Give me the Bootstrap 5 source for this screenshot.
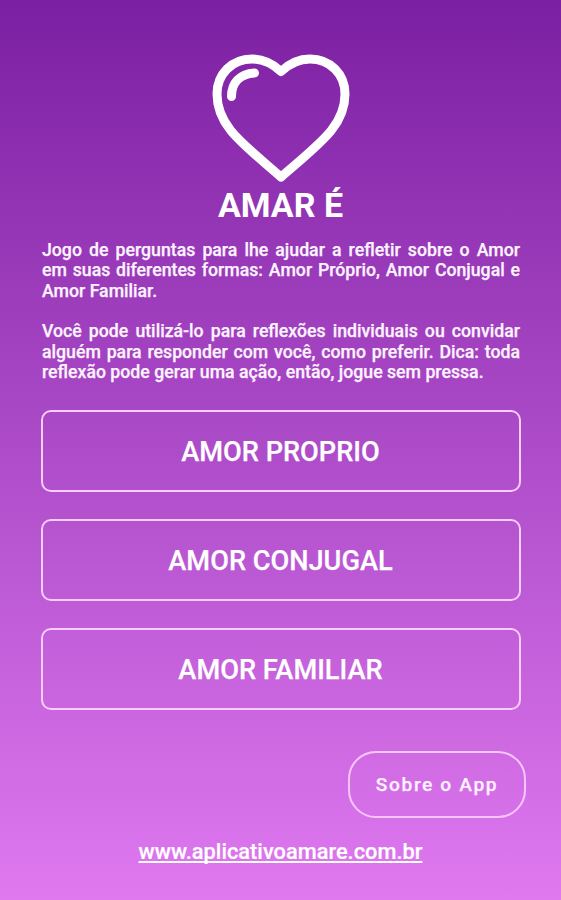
<!DOCTYPE html>
<html lang="pt-BR">
<head>
<meta charset="utf-8">
<meta name="viewport" content="width=device-width, initial-scale=1">
<title>Amar É</title>
<link href="https://cdn.jsdelivr.net/npm/bootstrap@5.3.0/dist/css/bootstrap.min.css" rel="stylesheet">
<style>
  body { font-family: Roboto, "Liberation Sans", sans-serif; background: linear-gradient(#7b1fa2, #e079f0) no-repeat; height: 900px; }
  .screen { height: 900px; padding: 52px 40px 0 41px; }
  .heart { width: 141px; height: 132px; margin-right: 1px; }
  .app-title { font-size: 34px; line-height: 42px; font-weight: 700; margin: 0 1px 0 0; }
  .intro { font-size: 17.7px; line-height: 20.4px; font-weight: 500; text-align: justify; color: #fdf3ff; -webkit-text-stroke: .25px; margin-top: 13.8px; padding: 0 1px; }
  .intro p { margin-bottom: 20.4px; }
  .choices { gap: 27px; margin-top: 7.2px; }
  .choice { --bs-btn-color: #fff; --bs-btn-border-color: #f6cdfb; --bs-btn-border-radius: 10px; --bs-btn-border-width: 2px; --bs-btn-font-size: 27.2px; --bs-btn-font-weight: 500; --bs-btn-padding-y: 0; height: 82px; padding: 2px 1px 0 0; -webkit-text-stroke: .25px; }
  .about { --bs-btn-color: #fdf0ff; --bs-btn-border-color: #f6c6fc; --bs-btn-border-radius: 28px; --bs-btn-border-width: 2px; --bs-btn-font-size: 19.2px; --bs-btn-font-weight: 500; width: 178px; height: 67px; letter-spacing: 1.6px; padding-top: 8px; margin: 41px -5px 0 0; -webkit-text-stroke: .25px; }
  .site { font-size: 21.8px; line-height: 26px; font-weight: 500; margin: 21px 1px 0 0; text-underline-offset: 2px; text-decoration-thickness: 2px; text-decoration-skip-ink: none; -webkit-text-stroke: .2px; }
</style>
</head>
<body>
<main class="screen d-flex flex-column text-white">
  <svg class="heart align-self-center" viewBox="210 52 141 132" fill="none" stroke="#fff" stroke-width="9" stroke-linejoin="round" stroke-linecap="round" aria-hidden="true">
    <path d="M281 71.500C272 63 263 59 252 59C232 59 217 74 217 94C217 126 242 143 281 177C320 143 345 126 345 94C345 74 330 59 310 59C299 59 290 63 281 71.500Z"/>
    <path d="M231.500 96.500C231.500 82.500 240 74 254.500 73"/>
  </svg>
  <h1 class="app-title text-center">AMAR É</h1>
  <div class="intro">
    <p>Jogo de perguntas para lhe ajudar a refletir sobre o Amor em suas diferentes formas: Amor Próprio, Amor Conjugal e Amor Familiar.</p>
    <p>Você pode utilizá-lo para reflexões individuais ou convidar alguém para responder com você, como preferir. Dica: toda reflexão pode gerar uma ação, então, jogue sem pressa.</p>
  </div>
  <div class="choices d-grid">
    <button type="button" class="btn choice">AMOR PROPRIO</button>
    <button type="button" class="btn choice">AMOR CONJUGAL</button>
    <button type="button" class="btn choice">AMOR FAMILIAR</button>
  </div>
  <button type="button" class="btn about align-self-end">Sobre o App</button>
  <a href="#" class="site link-light text-white align-self-center">www.aplicativoamare.com.br</a>
</main>
<script src="https://cdn.jsdelivr.net/npm/bootstrap@5.3.0/dist/js/bootstrap.bundle.min.js"></script>
</body>
</html>
